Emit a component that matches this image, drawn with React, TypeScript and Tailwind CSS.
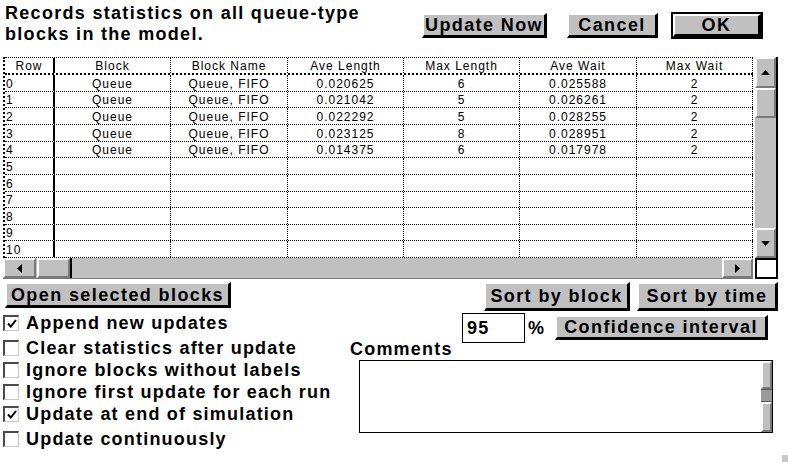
import React from 'react'

// Queue statistics dialog — table of queue blocks plus update options

const FONT = "font-['Liberation_Sans',Arial,sans-serif]"

const HEAD = ['Block', 'Block Name', 'Ave Length', 'Max Length', 'Ave Wait', 'Max Wait']

const DATA: string[][] = [
  ['Queue', 'Queue, FIFO', '0.020625', '6', '0.025588', '2'],
  ['Queue', 'Queue, FIFO', '0.021042', '5', '0.026261', '2'],
  ['Queue', 'Queue, FIFO', '0.022292', '5', '0.028255', '2'],
  ['Queue', 'Queue, FIFO', '0.023125', '8', '0.028951', '2'],
  ['Queue', 'Queue, FIFO', '0.014375', '6', '0.017978', '2'],
]

const ROW_H = ['h-[17px]', 'h-[16px]', 'h-[17px]', 'h-[17px]', 'h-[16px]', 'h-[17px]', 'h-[17px]', 'h-[16px]', 'h-[17px]', 'h-[16px]', 'h-[17px]']
const COL_W = ['w-[116px]', 'w-[117px]', 'w-[116px]', 'w-[116px]', 'w-[117px]', 'w-[116px]']

const OPTIONS = [
  { label: 'Append new updates', on: true, gap: '' },
  { label: 'Clear statistics after update', on: false, gap: 'mt-[3px]' },
  { label: 'Ignore blocks without labels', on: false, gap: '' },
  { label: 'Ignore first update for each run', on: false, gap: '' },
  { label: 'Update at end of simulation', on: true, gap: '' },
  { label: 'Update continuously', on: false, gap: 'mt-[3px]' },
]

function Btn({ children, className = '' }: { children: React.ReactNode; className?: string }) {
  return (
    <div
      className={`flex items-center justify-center bg-[#c0c0c0] border-t-2 border-l-2 border-t-white border-l-white border-b-[3px] border-r-[3px] border-b-black border-r-black text-[18px] font-bold tracking-[1.4px] text-black leading-none ${className}`}
    >
      {children}
    </div>
  )
}

function Arrow({ dir }: { dir: 'up' | 'down' | 'left' | 'right' }) {
  const pts = {
    up: '0,5 9,5 4.5,0',
    down: '0,0 9,0 4.5,5',
    left: '5,0 5,9 0,4.5',
    right: '0,0 0,9 5,4.5',
  }[dir]
  const vertical = dir === 'up' || dir === 'down'
  return (
    <svg width={vertical ? 9 : 5} height={vertical ? 5 : 9} viewBox={vertical ? '0 0 9 5' : '0 0 5 9'}>
      <polygon points={pts} fill="#000" />
    </svg>
  )
}

function ScrollBtn({ children, className = '' }: { children?: React.ReactNode; className?: string }) {
  return (
    <div className={`flex items-center justify-center bg-[#c0c0c0] border-t-2 border-l-2 border-t-white border-l-white border-b-2 border-r-2 border-b-[#7a7a7a] border-r-[#7a7a7a] ${className}`}>
      {children}
    </div>
  )
}

function CheckBox({ on }: { on: boolean }) {
  return (
    <span className="w-[16px] h-[16px] ml-[3px] shrink-0 bg-white border-t-2 border-l-2 border-t-[#4a4a4a] border-l-[#4a4a4a] border-b border-r border-b-[#c8c8c8] border-r-[#c8c8c8] flex items-center justify-center">
      {on && (
        <svg width="10" height="9" viewBox="0 0 10 9">
          <path d="M1 4.5 L3.8 7.5 L9 1" fill="none" stroke="#000" strokeWidth="2" />
        </svg>
      )}
    </span>
  )
}

export default function App() {
  return (
    <div className={`relative w-[788px] h-[464px] overflow-hidden bg-white text-black ${FONT}`}>
      {/* title and dialog buttons */}
      <div className="flex items-start h-[57px]">
        <p className="w-[422px] pl-[5px] pt-[3px] text-[18px] leading-[21px] font-bold tracking-[1.3px]">
          Records statistics on all queue-type blocks in the model.
        </p>
        <div className="flex items-start pt-[13px]">
          <Btn className="w-[125px] h-[25px]">Update Now</Btn>
          <Btn className="w-[91px] h-[25px] ml-[20px]">Cancel</Btn>
          <div className="ml-[13px] mt-[-1px] border-2 border-black">
            <Btn className="w-[88px] h-[23px]">OK</Btn>
          </div>
        </div>
      </div>

      {/* statistics table */}
      <div className="flex ml-[3px]">
        <div className="w-[750px] border-l-2 border-dotted border-black">
          <div className="flex h-[18px] border-t border-dotted border-black border-b-2 border-b-black border-b-solid text-[12px] tracking-[1px]">
            <div className="w-[50px] border-r-2 border-black flex items-center justify-center">Row</div>
            {HEAD.map((h, i) => (
              <div key={h} className={`${COL_W[i]} border-r border-dotted border-black flex items-center justify-center`}>
                {h}
              </div>
            ))}
          </div>
          {ROW_H.map((hc, r) => (
            <div key={r} className={`flex ${hc} border-b border-dotted border-black text-[12px] tracking-[1px] leading-none`}>
              <div className="w-[50px] border-r-2 border-black flex items-end pb-[1px] pl-[1px]">{r}</div>
              {COL_W.map((wc, c) => (
                <div key={c} className={`${wc} border-r border-dotted border-black flex items-end justify-center pb-[1px]`}>
                  {DATA[r]?.[c] ?? ''}
                </div>
              ))}
            </div>
          ))}
        </div>
        <div className="w-[2px]" />
        {/* vertical scrollbar */}
        <div className="w-[23px] h-[201px] bg-[#c0c0c0] border-r-2 border-black flex flex-col">
          <ScrollBtn className="h-[31px]">
            <Arrow dir="up" />
          </ScrollBtn>
          <ScrollBtn className="h-[30px]" />
          <div className="flex-1" />
          <ScrollBtn className="h-[30px]">
            <Arrow dir="down" />
          </ScrollBtn>
        </div>
      </div>

      {/* horizontal scrollbar */}
      <div className="flex ml-[3px] h-[21px]">
        <div className="w-[750px] bg-[#c0c0c0] border-b border-[#7a7a7a] flex">
          <ScrollBtn className="w-[33px] h-[20px]">
            <Arrow dir="left" />
          </ScrollBtn>
          <ScrollBtn className="w-[33px] h-[20px] ml-[1px]" />
          <div className="w-[2px] h-[20px] bg-black" />
          <div className="flex-1" />
          <ScrollBtn className="w-[31px] h-[20px]">
            <Arrow dir="right" />
          </ScrollBtn>
        </div>
        <div className="w-[2px]" />
        <div className="w-[23px] h-[21px] bg-white border-2 border-black" />
      </div>

      {/* options and sorting */}
      <div className="flex">
        <div className="w-[350px] flex flex-col">
          <Btn className="ml-[5px] mt-[3px] w-[226px] h-[26px]">Open selected blocks</Btn>
          <div className="mt-[4px] flex flex-col">
            {OPTIONS.map(o => (
              <div key={o.label} className={`flex items-center h-[22px] ${o.gap}`}>
                <CheckBox on={o.on} />
                <span className="ml-[7px] text-[18px] font-bold tracking-[1.2px] leading-none whitespace-nowrap">{o.label}</span>
              </div>
            ))}
          </div>
        </div>

        <div className="flex-1 flex flex-col">
          <div className="flex justify-end pr-[10px] mt-[3px]">
            <Btn className="w-[146px] h-[29px]">Sort by block</Btn>
            <Btn className="w-[141px] h-[29px] ml-[7px]">Sort by time</Btn>
          </div>
          <div className="flex items-start h-[30px] mt-[2px]">
            <div className="ml-[112px] w-[63px] h-[30px] border border-black flex items-center pl-[4px] text-[18px] font-bold tracking-[1.2px]">
              95
            </div>
            <span className="ml-[3px] mt-[6px] text-[18px] font-bold leading-none">%</span>
            <Btn className="ml-[11px] mt-[2px] w-[213px] h-[25px]">Confidence interval</Btn>
          </div>
          <p className="-mt-[4px] h-[20px] text-[18px] leading-[20px] font-bold tracking-[1.2px]">Comments</p>
          <div className="ml-[9px] mt-[1px] w-[414px] h-[73px] border border-black flex justify-end">
            <div className="w-[11px] flex flex-col bg-[#c0c0c0]">
              <ScrollBtn className="h-[28px] border-t-0" />
              <div className="h-[13px] bg-[#9a9a9a] border-y border-[#555]" />
              <ScrollBtn className="flex-1" />
            </div>
          </div>
        </div>
      </div>

      <div className="absolute right-0 bottom-[2px] w-[6px] h-[7px] bg-[#c8c8c8]" />
    </div>
  )
}
